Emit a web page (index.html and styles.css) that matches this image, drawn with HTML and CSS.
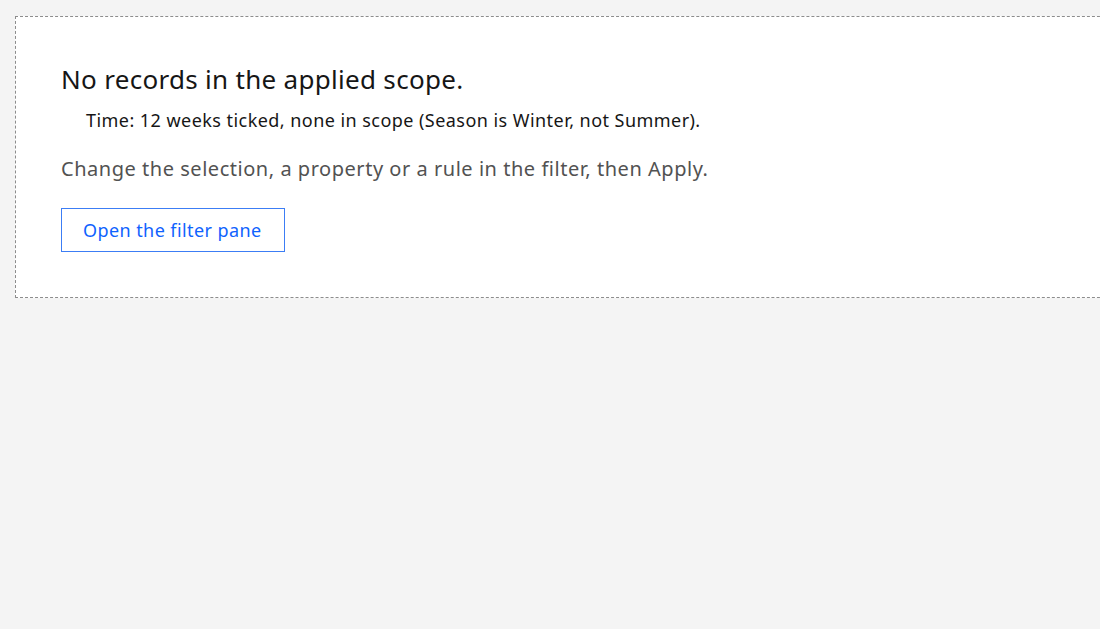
FILE: index.html
```html
<!DOCTYPE html>
<html lang="en">
<head>
<meta charset="utf-8">
<title>No records</title>
<link rel="stylesheet" href="styles.css">
</head>
<body>
<section class="empty">
  <h2 class="empty-title">No records in the applied scope.</h2>
  <ul class="reasons">
    <li>Time: 12 weeks ticked, none in scope (Season is Winter, not Summer).</li>
  </ul>
  <p class="hint">Change the selection, a property or a rule in the filter, then Apply.</p>
  <button class="open-btn" type="button">Open the filter pane</button>
</section>
</body>
</html>
```
FILE: styles.css
```css
html, body {
  margin: 0;
  padding: 0;
  background: #f4f4f4;
  overflow: hidden;
}
body {
  padding: 16px 0 0 15px;
  font-family: "Noto Sans", "Open Sans", sans-serif;
  color: #161616;
}
.empty {
  box-sizing: border-box;
  width: 1120px;
  height: 282px;
  background: #ffffff;
  border: 1px dashed #8d8d8d;
  padding: 46px 45px 0 45px;
}
.empty-title {
  margin: 0;
  font-size: 26px;
  font-weight: 400;
  line-height: 32px;
  letter-spacing: 0.3px;
}
.reasons {
  list-style: none;
  margin: 13px 0 0 0;
  padding: 0 0 0 25px;
  font-size: 18px;
  line-height: 24px;
  letter-spacing: 0.45px;
}
.hint {
  margin: 23px 0 0 0;
  font-size: 20px;
  line-height: 28px;
  letter-spacing: 0.53px;
  color: #525252;
}
.open-btn {
  display: block;
  margin-top: 25px;
  box-sizing: border-box;
  width: 224px;
  height: 44px;
  background: #ffffff;
  border: 1px solid #3c7df5;
  color: #0f62fe;
  font-family: inherit;
  font-size: 18px;
  letter-spacing: 0.42px;
  padding: 0 21px;
  text-align: left;
  cursor: pointer;
}
```
